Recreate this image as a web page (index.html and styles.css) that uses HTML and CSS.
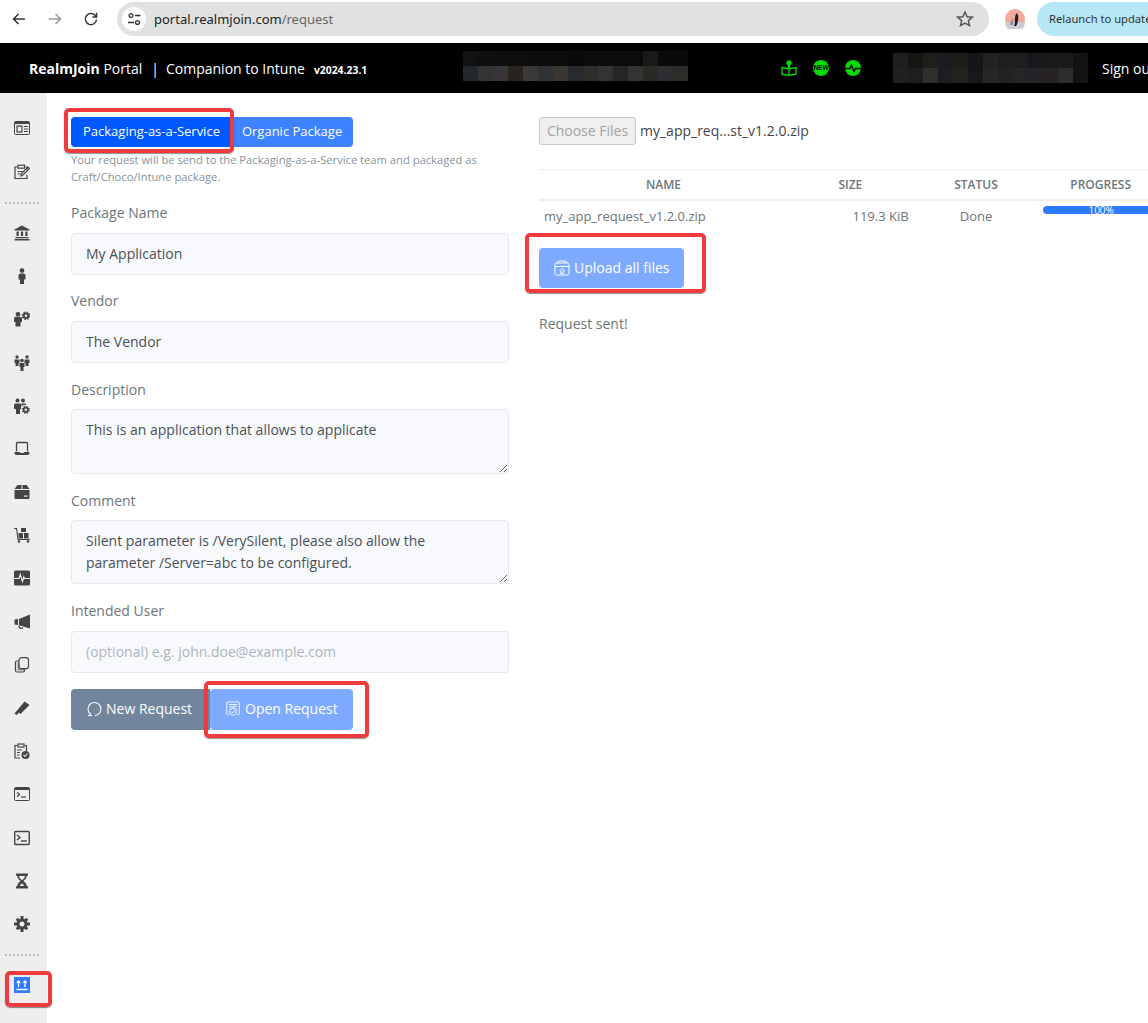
FILE: index.html
```html
<!DOCTYPE html>
<html lang="en">
<head>
  <meta charset="UTF-8" />
  <title>RealmJoin Portal</title>
  <link rel="stylesheet" href="styles.css">
</head>
<body>
  <div class="browser-bar">
    <svg class="nav-icon" viewBox="0 0 16 16"><path d="M14 8H3M7.5 3 2.5 8l5 5" fill="none" stroke="#333" stroke-width="1.5"/></svg>
    <svg class="nav-icon" viewBox="0 0 16 16"><path d="M2 8h11M8.5 3l5 5-5 5" fill="none" stroke="#9a9a9a" stroke-width="1.5"/></svg>
    <svg class="nav-icon" viewBox="0 0 16 16"><path d="M13.5 8.5A5.6 5.6 0 1 1 11.8 4L13.5 5.6M13.6 1.8v4.2H9.4" fill="none" stroke="#333" stroke-width="1.5"/></svg>
    <div class="address">
      <span class="site-info">
        <svg viewBox="0 0 16 16" width="16" height="16"><circle cx="5" cy="4.5" r="1.9" fill="none" stroke="#333" stroke-width="1.3"/><path d="M9 4.5h5.500M2 11.500h6" stroke="#333" stroke-width="1.4"/><circle cx="11.500" cy="11.500" r="1.900" fill="none" stroke="#333" stroke-width="1.3"/></svg>
      </span>
      <span class="url">portal.realmjoin.com<span class="url-path">/request</span></span>
      <svg class="star" viewBox="0 0 18 18"><path d="M9 2l2.100 4.700 5.100.5-3.900 3.400 1.200 5L9 13l-4.500 2.600 1.200-5L1.800 7.200l5.100-.5z" fill="none" stroke="#555" stroke-width="1.500"/></svg>
    </div>
    <svg class="avatar" viewBox="0 0 20 20"><circle cx="10" cy="10" r="10" fill="#f4a99b"/><path d="M0 13h20a10 10 0 0 1-20 0z" fill="#c9ccd6"/><path d="M11 4.500c2 0 2.300 2 2.300 4 0 4-1 7-2.300 8.500H9c1.500-3 .5-6 1-8.500z" fill="#222"/><path d="M8 9l-3.500 6.500L8 16z" fill="#8a8a8a"/></svg>
    <div class="relaunch">Relaunch to update</div>
  </div>

  <header class="topbar">
    <div class="brand"><b>RealmJoin</b> Portal<span class="sep">|</span>Companion to Intune<small>v2024.23.1</small></div>
    <div class="blur blur-a"></div>
    <div class="status-icons">
      <svg viewBox="0 0 16 16"><circle cx="8" cy="2.800" r="2.600" fill="#0d0"/><path d="M8 5v3" stroke="#0d0" stroke-width="2.400"/><path d="M1 7.500 8 9l7-1.500v6.700L8 15.500 1 14.200zM8 9v6.500" fill="none" stroke="#0d0" stroke-width="1.300"/></svg>
      <svg viewBox="0 0 16 16"><circle cx="8" cy="8" r="8" fill="#0d0"/><text x="8" y="10.300" text-anchor="middle" class="new-text">NEW</text></svg>
      <svg viewBox="0 0 16 16"><circle cx="8" cy="8" r="8" fill="#0d0"/><path d="M0 8.500h5l1.500-3.500 2.500 6.500 1.500-3H16" fill="none" stroke="#000" stroke-width="1.400"/></svg>
    </div>
    <div class="blur blur-b"></div>
    <a class="signout">Sign out</a>
  </header>

  <div class="layout">
    <nav class="sidebar">
      <svg class="side-icon" viewBox="0 0 16 16"><rect x=".5" y="1.500" width="15" height="13" rx="1" fill="none" stroke="#444"/><rect x="1" y="2" width="14" height="2" fill="#444"/><rect x="3" y="6" width="5" height="6" fill="none" stroke="#444" stroke-width="1.200"/><path d="M10 6.500h4M10 9h4M10 11.500h4" stroke="#444"/></svg>
      <svg class="side-icon" viewBox="0 0 16 16"><path d="M11.500 3H13v3M13 11v3.500H1V3h2.500" fill="none" stroke="#444" stroke-width="1.200"/><rect x="4" y="1.200" width="6.500" height="3" fill="none" stroke="#444" stroke-width="1.200"/><path d="M3.500 7.500h5M3.500 10h3M7 12l.5-2.500L14 3l1.500 1.500L9 11z" fill="none" stroke="#444" stroke-width="1.200"/></svg>
      <div class="dots"></div>
      <svg class="side-icon" viewBox="0 0 16 16"><path d="M8 .5 15.500 4.500V5.500H.5V4.500z" fill="#444"/><path d="M.5 14h15v1.500H.5zM1.500 12h13v1.200h-13zM2.500 6.500h2.200V11H2.500zM6.900 6.500h2.200V11H6.900zM11.300 6.500h2.200V11h-2.200z" fill="#444"/></svg>
      <svg class="side-icon" viewBox="0 0 16 16"><circle cx="8" cy="2.600" r="2.400" fill="#444"/><path d="M4.500 7a2 2 0 0 1 2-1.500h3a2 2 0 0 1 2 1.500v4.500H10V16H6v-4.500H4.500z" fill="#444"/></svg>
      <svg class="side-icon" viewBox="0 0 16 16"><circle cx="4" cy="3.300" r="2.300" fill="#444"/><path d="M0 7.500A1.800 1.800 0 0 1 1.800 5.800h4.400A1.800 1.800 0 0 1 8 7.500V11H6.500v4.500h-5V11H0z" fill="#444"/><circle cx="12" cy="4.800" r="2.300" fill="none" stroke="#444" stroke-width="2"/><circle cx="12" cy="4.800" r="3.700" fill="none" stroke="#444" stroke-width="1.400" stroke-dasharray="1.500 1.400"/></svg>
      <svg class="side-icon" viewBox="0 0 16 16"><g fill="#444"><circle cx="3" cy="2" r="1.700"/><path d="M.5 4.500h5V8H4.500v3h-3V8H.5z"/><circle cx="13" cy="2" r="1.700"/><path d="M10.500 4.500h5V8h-1v3h-3V8h-1z"/><circle cx="8" cy="5.500" r="1.800"/><path d="M5.500 8h5v4H9.500v4h-3v-4h-1z"/></g></svg>
      <svg class="side-icon" viewBox="0 0 16 16"><g fill="#444"><circle cx="3.500" cy="2.500" r="2"/><circle cx="9" cy="2.500" r="2"/><path d="M0 7a1.500 1.500 0 0 1 1.500-1.500H7V11H6v5H2v-5H0z"/><path d="M7.500 5.500h3.500a1 1 0 0 1 1 1v.5H9l-1.500 2z"/></g><circle cx="11.800" cy="11.800" r="2.200" fill="none" stroke="#444" stroke-width="1.800"/><circle cx="11.800" cy="11.800" r="3.500" fill="none" stroke="#444" stroke-width="1.200" stroke-dasharray="1.400 1.350"/></svg>
      <svg class="side-icon" viewBox="0 0 16 16"><path d="M2.500 10.500V2.500a1 1 0 0 1 1-1h9a1 1 0 0 1 1 1v8" fill="none" stroke="#444" stroke-width="1.300"/><path d="M.5 11H5.500l1 1h3l1-1h5v1a2 2 0 0 1-2 2h-11a2 2 0 0 1-2-2z" fill="#444"/></svg>
      <svg class="side-icon" viewBox="0 0 16 16"><path d="M3.500 1H7.500V5H.5zM8.500 1h4l3 4h-7zM.5 6h15v8a1 1 0 0 1-1 1H1.500a1 1 0 0 1-1-1z" fill="#444"/><rect x="10" y="11.500" width="3.500" height="1.200" fill="#eee"/></svg>
      <svg class="side-icon" viewBox="0 0 16 16"><path d="M0 1.500h2.500L4 12.500h12" fill="none" stroke="#444" stroke-width="1.100"/><path d="M4.500 6h4.500v5.500H4.500zM10 6h4.500v5.500H10zM7 1h5v4H7z" fill="#444"/><circle cx="5" cy="14.500" r="1.300" fill="#444"/><circle cx="14" cy="14.500" r="1.300" fill="#444"/></svg>
      <svg class="side-icon" viewBox="0 0 16 16"><rect y=".5" width="16" height="15" rx="1.500" fill="#444"/><path d="M0 8.500h5l1.300-4 2.200 7 1.300-4.500.7 1.500H16" fill="none" stroke="#eee" stroke-width="1.200"/></svg>
      <svg class="side-icon" viewBox="0 0 16 16"><path d="M16 .5v14L5 11.300V5zM.5 5.500 4 5v6L.5 10.500z" fill="#444"/><path d="M5 11.500A2.300 2.300 0 0 0 9 13.500" fill="none" stroke="#444" stroke-width="1.300"/></svg>
      <svg class="side-icon" viewBox="0 0 16 16"><rect x="5" y=".7" width="9.500" height="11" rx="2.500" fill="none" stroke="#444" stroke-width="1.200"/><path d="M5 4H3a1.500 1.500 0 0 0-1.500 1.500v8A1.500 1.500 0 0 0 3 15h6a1.500 1.500 0 0 0 1.500-1.500V12" fill="none" stroke="#444" stroke-width="1.200"/><path d="M3.500 5.500h1.500v6.500l5 0v1.500H3.500z" fill="#444" opacity=".55"/></svg>
      <svg class="side-icon" viewBox="0 0 16 16"><path d="M10.500 1.500 15.500 5 6.500 14 5 12.500 2.500 15 .5 13.500z" fill="#444"/></svg>
      <svg class="side-icon" viewBox="0 0 16 16"><path d="M10.500 2.500H12.500V8M6 15H1V2.500h2.500" fill="none" stroke="#444" stroke-width="1.200"/><rect x="4" y="1" width="6" height="3" fill="none" stroke="#444" stroke-width="1.200"/><path d="M3 7h5M3 9.500h3M3 12h2.500" stroke="#444"/><circle cx="11.500" cy="12" r="4" fill="#444"/><path d="M9.500 12l1.500 1.500 2.500-2.800" fill="none" stroke="#eee" stroke-width="1.100"/></svg>
      <svg class="side-icon" viewBox="0 0 16 16"><rect x=".5" y="1.500" width="15" height="13" rx="1" fill="none" stroke="#444"/><rect x="1" y="2" width="14" height="2" fill="#444"/><path d="M3 6.500l2.500 2-2.500 2" fill="none" stroke="#444" stroke-width="1.200"/><path d="M7 11h5" stroke="#444" stroke-width="1.200"/></svg>
      <svg class="side-icon" viewBox="0 0 16 16"><rect x=".7" y="1.500" width="14.600" height="13" rx="1" fill="none" stroke="#444" stroke-width="1.400"/><path d="M3 5l3 2.500-3 2.500" fill="none" stroke="#444" stroke-width="1.400"/><path d="M7 11h6" stroke="#444" stroke-width="1.400"/></svg>
      <svg class="side-icon" viewBox="0 0 16 16"><path d="M2 .5h12v2.300h-1.200c0 2.700-2.300 4-3.300 5.200 1 1.200 3.300 2.500 3.300 5.200H14v2.300H2v-2.300h1.200c0-2.700 2.300-4 3.300-5.200-1-1.200-3.300-2.500-3.300-5.200H2z" fill="#444"/><path d="M5 3h6c0 1.500-1.500 3-3 4.200C6.500 6 5 4.500 5 3zM8 10.500c1 .8 2 1.700 2.300 2.500H5.700c.3-.8 1.300-1.700 2.300-2.500z" fill="#eee"/></svg>
      <svg class="side-icon" viewBox="0 0 16 16"><circle cx="8" cy="8" r="4" fill="none" stroke="#444" stroke-width="3"/><path d="M6.500 0h3v3h-3zM6.500 13h3v3h-3zM0 6.500h3v3H0zM13 6.500h3v3h-3zM1.700 3.800 3.800 1.700l2 2-2.100 2.100zM10.200 12.300l2.100-2.100 2 2-2.100 2.100zM12.300 1.700l2 2.100-2.100 2-2-2.100zM3.700 10.200l2.100 2.100-2 2-2.100-2.100z" fill="#444"/></svg>
      <div class="dots"></div>
      <svg class="side-icon" viewBox="0 0 16 16"><rect width="16" height="16" fill="#2f7bff"/><path d="M4.500 10V4M2.800 5.800 4.500 4l1.700 1.800M11 10V4M9.300 5.800 11 4l1.700 1.800M2.500 12.500h11" fill="none" stroke="#fff" stroke-width="1.300"/></svg>
    </nav>

    <main class="content">
      <section class="request-form">
        <div class="tabs">
          <button class="tab tab-active">Packaging-as-a-Service</button>
          <button class="tab">Organic Package</button>
        </div>
        <p class="help">Your request will be send to the Packaging-as-a-Service team and packaged as Craft/Choco/Intune package.</p>

        <label class="field-label">Package Name</label>
        <input class="field" type="text" value="My Application">
        <label class="field-label">Vendor</label>
        <input class="field" type="text" value="The Vendor">
        <label class="field-label field-label-low">Description</label>
        <textarea class="field area">This is an application that allows to applicate</textarea>
        <label class="field-label field-label-low">Comment</label>
        <textarea class="field area area-short">Silent parameter is /VerySilent, please also allow the parameter /Server=abc to be configured.</textarea>
        <label class="field-label field-label-last">Intended User</label>
        <input class="field" type="text" placeholder="(optional) e.g. john.doe@example.com">

        <div class="form-actions">
          <button class="btn btn-grey">
            <svg viewBox="0 0 16 16"><path d="M4 13.500A6.500 6.500 0 1 1 8 14.500" fill="none" stroke="#fff" stroke-width="1.100"/><path d="M1 14.500h4" stroke="#fff" stroke-width="1.100"/></svg>
            New Request
          </button>
          <button class="btn btn-light">
            <svg viewBox="0 0 18 18"><path d="M4 15.500H3a1 1 0 0 1-1-1V2a1 1 0 0 1 1-1h12a1 1 0 0 1 1 1v12.500a1 1 0 0 1-1 1h-1M4.500 4h9M4.500 6.500h9" fill="none" stroke="#fff" stroke-width="1"/><circle cx="9" cy="12" r="4" fill="none" stroke="#fff"/><path d="M7 12l1.500 1.500 2.500-3" fill="none" stroke="#fff"/></svg>
            Open Request
          </button>
        </div>
      </section>

      <section class="uploader">
        <div class="file-row">
          <button class="choose" disabled>Choose Files</button>
          <span class="file-name">my_app_req...st_v1.2.0.zip</span>
        </div>
        <table class="file-table">
          <thead>
            <tr><th>NAME</th><th>SIZE</th><th>STATUS</th><th>PROGRESS</th></tr>
          </thead>
          <tbody>
            <tr>
              <td class="name-cell">my_app_request_v1.2.0.zip</td>
              <td class="size-cell">119.3 KiB</td>
              <td class="status-cell">Done</td>
              <td class="progress-cell"><div class="progress">100%</div></td>
            </tr>
          </tbody>
        </table>
        <button class="btn btn-light btn-upload">
          <svg viewBox="0 0 16 16"><rect x="1" y="3" width="14" height="12" rx="1.500" fill="none" stroke="#fff"/><path d="M1 6.500h14M3 3l1.500-2h7L13 3M5.500 11 8 8.500 10.500 11M6.800 11v2.500h2.400V11" fill="none" stroke="#fff"/></svg>
          Upload all files
        </button>
        <p class="sent">Request sent!</p>
      </section>
    </main>
  </div>

  <div class="mark mark-tab"></div>
  <div class="mark mark-upload"></div>
  <div class="mark mark-open"></div>
  <div class="mark mark-side"></div>
</body>
</html>
```
FILE: styles.css
```css
* {
  box-sizing: border-box;
}
html, body {
  margin: 0;
  height: 1023px;
  overflow: hidden;
}
body {
  font-family: "Open Sans", sans-serif;
  font-size: 14px;
  color: #495057;
  background-color: #fff;
  position: relative;
}

/* browser chrome */
.browser-bar {
  height: 43px;
  display: flex;
  align-items: center;
  padding: 0 0 5px 11px;
  overflow: hidden;
}
.nav-icon {
  width: 16px;
  height: 16px;
  margin-right: 20px;
  flex: none;
}
.nav-icon:nth-child(3) {
  margin-right: 18px;
}
.address {
  width: 872px;
  height: 34px;
  border-radius: 17px;
  background-color: #e1e1e1;
  display: flex;
  align-items: center;
  padding: 0 15px 0 5px;
  flex: none;
}
.site-info {
  width: 24px;
  height: 24px;
  border-radius: 50%;
  background-color: #fff;
  display: flex;
  align-items: center;
  justify-content: center;
}
.url {
  font-family: "Noto Sans", sans-serif;
  font-size: 13px;
  color: #222;
  margin-left: 8px;
  flex: 1;
}
.url-path {
  color: #666;
}
.star {
  width: 18px;
  height: 18px;
}
.avatar {
  width: 20px;
  height: 20px;
  margin-left: 16px;
  flex: none;
}
.relaunch {
  font-family: "Noto Sans", sans-serif;
  font-size: 11.200px;
  color: #333;
  background-color: #b6e7f4;
  border-radius: 17px;
  height: 34px;
  line-height: 34px;
  padding: 0 12px;
  margin-left: 12px;
  width: 140px;
  white-space: nowrap;
  overflow: hidden;
  flex: none;
}

/* portal header */
.topbar {
  height: 50px;
  background-color: #000;
  color: #fff;
  display: flex;
  align-items: center;
  padding-left: 29px;
  overflow: hidden;
}
.brand {
  width: 434px;
  white-space: nowrap;
  flex: none;
}
.brand b {
  font-weight: 700;
}
.sep {
  margin: 0 7px 0 9px;
}
.brand small {
  font-size: 10.400px;
  font-weight: 700;
  margin-left: 9px;
}
.blur {
  flex: none;
  height: 30px;
  background-size: 100% 50%;
  background-repeat: no-repeat;
  background-position: top, bottom;
}
/* pixelated cells hiding the tenant name: 15px wide, two rows */
.blur-a {
  width: 225px;
  margin-top: -4px;
  background-image:
    linear-gradient(90deg, #101214 0 15px, #0f0f0f 0 30px, #0e0e0e 0 60px, #0d0d0d 0 75px, #0c0c0c 0 90px, #0b0b0b 0 105px, #0b0a07 0 120px, #0c0c0c 0 135px, #0b0b0b 0 180px, #181918 0 195px, #0a0a0a 0),
    linear-gradient(90deg, #25282a 0 15px, #363432 0 30px, #37353a 0 45px, #27241e 0 60px, #3a3838 0 75px, #2f3135 0 90px, #3b3632 0 105px, #282a2e 0 120px, #2f2d2a 0 135px, #303432 0 150px, #262626 0 165px, #333432 0 180px, #2a2926 0 195px, #2d2e31 0 210px, #2e2d29 0);
}
.blur-b {
  width: 195px;
  background-image:
    linear-gradient(90deg, #1c1e20 0 15px, #141614 0 30px, #1e1e1a 0 45px, #1a1c20 0 60px, #1d1d18 0 75px, #141618 0 90px, #202322 0 105px, #1e1f1c 0 120px, #1d1f1d 0 135px, #16181c 0 150px, #1b1917 0 165px, #1a1a19 0 180px, #121214 0),
    linear-gradient(90deg, #1e2022 0 15px, #1c1e20 0 30px, #302f2a 0 45px, #1c1e22 0 60px, #22231c 0 75px, #161718 0 90px, #292626 0 105px, #212323 0 120px, #242526 0 135px, #222428 0 150px, #262221 0 165px, #2d2b2b 0 180px, #131313 0);
}
.status-icons {
  display: flex;
  gap: 16px;
  margin-left: 93px;
  margin-right: 32px;
}
.status-icons svg {
  width: 16px;
  height: 16px;
}
.new-text {
  font-family: "Liberation Sans", sans-serif;
  font-size: 6.500px;
  font-weight: 700;
  fill: #000;
}
.signout {
  margin-left: 14px;
  white-space: nowrap;
}

/* page layout */
.layout {
  display: flex;
  height: 930px;
}
.sidebar {
  width: 47px;
  flex: none;
  background-color: #eee;
  padding: 27.400px 0 0 14px;
  display: flex;
  flex-direction: column;
}
.side-icon {
  width: 16px;
  height: 16px;
  margin-bottom: 27.200px;
  flex: none;
}
.dots {
  width: 34px;
  height: 0;
  margin: -5px 0 21.200px -9px;
  border-top: 2px dotted #bbb;
}
.content {
  flex: 1;
  display: flex;
  padding: 24px 0 0 24px;
  min-width: 0;
}

/* left form */
.request-form {
  width: 438px;
  flex: none;
}
.tabs {
  display: flex;
}
.tab {
  font: 13px "Open Sans", sans-serif;
  height: 30px;
  padding: 0 11px 2px 10px;
  color: #fff;
  background-color: #3d82ff;
  border: none;
  border-radius: 0 4px 4px 0;
}
.tab-active {
  background-color: #0059ff;
  border-radius: 4px 0 0 4px;
  padding: 0 12px 2px;
}
.help {
  font-size: 11.200px;
  line-height: 17px;
  color: #8a929a;
  margin: 4px 0 0;
}
.field-label {
  display: block;
  color: #6c757d;
  line-height: 20px;
  margin-top: 16px;
  margin-bottom: 10px;
}
.help + .field-label {
  margin-top: 18px;
}
.field-label-low {
  margin-top: 17px;
  margin-bottom: 9px;
}
.field-label-last {
  margin-top: 17px;
}
.field {
  display: block;
  width: 100%;
  height: 42px;
  padding: 0 14px 2px;
  font: 14px "Open Sans", sans-serif;
  color: #495057;
  background-color: #f8f9fd;
  border: 1px solid #e6e8f0;
  border-radius: 4px;
  outline: none;
}
.field::placeholder {
  color: #adb5bd;
}
.area {
  height: 65px;
  padding: 9px 14px;
  line-height: 22px;
  resize: vertical;
}
.area-short {
  height: 64px;
}
.form-actions {
  display: flex;
  margin-top: 16px;
}
.btn {
  font: 14px "Open Sans", sans-serif;
  color: #fff;
  height: 41px;
  border: none;
  display: flex;
  align-items: center;
  gap: 3px;
  padding-bottom: 3px;
}
.btn svg {
  width: 16px;
  height: 16px;
  margin-top: 1px;
}
.btn-grey {
  width: 139px;
  padding-left: 16px;
  background-color: #71869d;
  border-radius: 4px 0 0 4px;
}
.btn-light {
  background-color: #7eabff;
  border-radius: 4px;
  gap: 4px;
}
.form-actions .btn-light {
  width: 143px;
  padding-left: 15px;
}

/* right upload panel */
.uploader {
  margin-left: 30px;
  width: 623px;
  flex: none;
}
.file-row {
  display: flex;
  align-items: center;
  height: 28px;
}
.choose {
  font: 14px "Open Sans", sans-serif;
  color: #a3a3a3;
  background-color: #efefef;
  border: 1px solid #c9c9c9;
  border-radius: 3px;
  height: 28px;
  width: 97px;
  padding: 0 0 2px;
}
.file-name {
  margin-left: 4px;
  color: #444;
  padding-bottom: 1px;
}
.file-table {
  width: 623px;
  table-layout: fixed;
  border-collapse: collapse;
  margin-top: 24px;
}
.file-table th {
  font-size: 12px;
  font-weight: 600;
  color: #6c757d;
  height: 30px;
  border-top: 1px solid #eceef2;
  border-bottom: 2px solid #eceef2;
  padding: 0;
}
.file-table th:first-child {
  width: 249px;
}
.file-table th:nth-child(n+3) {
  padding-left: 2px;
}
.file-table td {
  font-size: 13px;
  color: #6c757d;
  padding: 0;
  height: 32px;
}
.name-cell {
  padding-left: 5px !important;
}
.size-cell {
  text-align: right;
  padding-right: 4px !important;
}
.status-cell {
  text-align: center;
  padding-left: 2px !important;
}
.progress-cell {
  vertical-align: top;
  padding: 0 0 0 6px !important;
}
.progress {
  height: 8px;
  margin-top: 5px;
  font-size: 10px;
  line-height: 8px;
  color: #fff;
  text-align: center;
  background-color: #2f7bff;
  border-radius: 4px 0 0 4px;
  padding-right: 3px;
}
.btn-upload {
  width: 145px;
  height: 40px;
  margin-top: 16px;
  padding-left: 15px;
  padding-bottom: 2px;
}
.sent {
  color: #6c757d;
  margin: 26px 0 0;
  line-height: 20px;
}

/* red annotation frames drawn over the screenshot */
.mark {
  position: absolute;
  border: 4px solid #ef3a3e;
  border-radius: 5px;
  box-shadow: 0 1px 1px rgba(0, 0, 0, .45);
}
.mark-tab {
  left: 64px;
  top: 108px;
  width: 170px;
  height: 45px;
}
.mark-upload {
  left: 525px;
  top: 233px;
  width: 181px;
  height: 60px;
}
.mark-open {
  left: 204px;
  top: 681px;
  width: 165px;
  height: 57px;
}
.mark-side {
  left: 5px;
  top: 971px;
  width: 47px;
  height: 36px;
}
```
